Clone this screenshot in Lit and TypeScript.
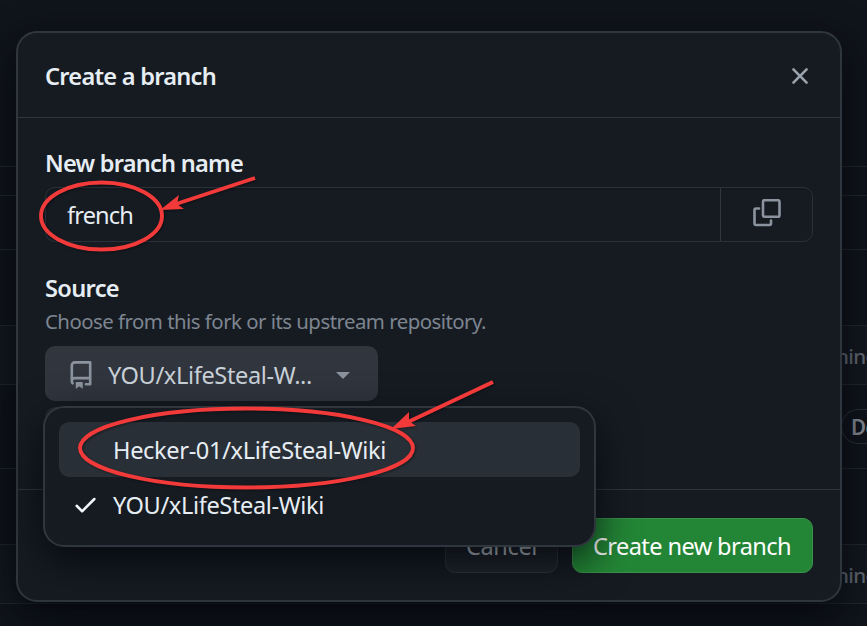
import { LitElement, html, css, svg } from "lit";
import { customElement } from "lit/decorators.js";

@customElement("app-root")
export class AppRoot extends LitElement {
  static styles = css`
    :host { display: block; position: relative; width: 867px; height: 626px; overflow: hidden;
      background: #10141b; color: #e6edf3; font: 23.6px/36px "Noto Sans", "Open Sans", sans-serif; box-sizing: border-box; }
    * { box-sizing: border-box; }
    svg { display: block; }
    .t { white-space: nowrap; display: block; }
    .page { position: absolute; inset: 0; display: grid; grid-template-rows: 167px 29px 54px 76px 59px 84px 76px 59px 1fr; color: #646b75; font-size: 20.6px; }
    .row { border-bottom: 1px solid #22272e; display: flex; align-items: center; justify-content: flex-end; overflow: hidden; }
    .row:last-child { border-bottom: 0; }
    .row.tint { background: #13181f; padding-top: 1px; }
    .clip { width: 31px; overflow: hidden; white-space: nowrap; letter-spacing: -0.6px; font-weight: 500; }
    .pill { width: 26px; height: 35px; flex: none; border: 1px solid #2b3037; border-right: 0; border-radius: 18px 0 0 18px; padding-left: 9px; line-height: 35px; font-weight: 600; color: #868c95; overflow: hidden; white-space: nowrap; letter-spacing: -0.8px; }
    .dialog { position: absolute; left: 16px; top: 31px; width: 826px; height: 571px; border: 2px solid #30363d; border-radius: 21px;
      background: #161b22; box-shadow: 0 14px 41px rgba(1, 4, 9, .75); display: flex; flex-direction: column; }
    header { height: 85px; flex: none; border-bottom: 1px solid #30363d; display: flex; justify-content: space-between; align-items: center; padding: 1px 26px 0 27px; }
    .b { font-weight: 600; }
    .body { flex: 1; padding: 27px 27px 0; display: flex; flex-direction: column; }
    .field { display: flex; height: 55px; margin-top: 6px; border: 1px solid #2b3138; border-radius: 10px; box-shadow: inset 0 2px 0 rgba(1, 4, 9, .12); }
    .value { flex: 1; padding: 9px 0 0 21px; }
    .copy { width: 92px; border-left: 1px solid #30363d; display: flex; justify-content: center; padding-top: 11px; }
    .source { margin-top: 28px; }
    .hint { color: #7d8590; font-size: 20.4px; line-height: 30px; }
    .select { width: 333px; height: 55px; flex: none; margin-top: 10px; border-radius: 10px; background: #30353e; color: #c9d1d9; display: flex; align-items: center; padding: 3px 28px 0 22px; }
    .select .t { margin-left: 13px; width: 210px; flex: none; }
    .caret { margin-left: 18px; border: 7px solid transparent; border-top-color: #8b949e; border-bottom: 0; }
    footer { height: 111px; flex: none; border-top: 1px solid #30363d; display: flex; justify-content: flex-end; padding: 28px 27px 0 0; gap: 14px; }
    .btn { height: 55px; border-radius: 10px; border: 1px solid #30353c; background: #1f242b; color: #c9d1d9; padding: 9px 0 0 20px; width: 113px; }
    .btn.go { width: 241px; background: #238636; border-color: #3b9249; color: #fff; }
    .under { position: absolute; left: 45px; top: 407px; width: 60px; height: 60px; border-radius: 10px; background: #252a31; }
    .menu { position: absolute; left: 43px; top: 406px; width: 553px; height: 141px; border: 2px solid #30363d; border-radius: 21px; background: #161b22;
      padding: 14px; box-shadow: 0 14px 41px rgba(1, 4, 9, .75); }
    .item { height: 55px; border-radius: 10px; display: flex; align-items: center; padding-left: 13px; padding-top: 1px; }
    .item.on { background: #292f36; }
    .tick { width: 41px; height: 28px; flex: none; }
    .marks { position: absolute; left: 0; top: 0; filter: drop-shadow(1px 1px 1px rgba(0, 0, 0, .4)); }
  `;

  updated() {
    // Spread each label's letters to reach its design width.
    const fit = () => this.renderRoot.querySelectorAll<HTMLElement>("[data-w]").forEach((el) => {
      el.style.letterSpacing = "0px";
      const range = document.createRange();
      range.selectNodeContents(el);
      const n = el.textContent!.length;
      el.style.letterSpacing = (Number(el.dataset.w) - range.getBoundingClientRect().width) / n + "px";
    });
    fit();
    document.fonts.ready.then(fit);
  }

  label(text: string, w: number, cls = "") {
    return html`<span class="t ${cls}" data-w=${w}>${text}</span>`;
  }

  icon(d: string, fill: string, size = 28) {
    return html`<svg width=${size} height=${size} viewBox="0 0 16 16" fill=${fill}>${svg`<path d=${d} />`}</svg>`;
  }

  render() {
    return html`
      <div class="page">
        <div class="row"></div><div class="row"></div><div class="row"></div><div class="row"></div>
        <div class="row tint"><span class="clip">hing</span></div>
        <div class="row"><span class="pill">De</span></div>
        <div class="row"></div>
        <div class="row tint"><span class="clip">hing</span></div>
        <div class="row"></div>
      </div>
      <section class="dialog">
        <header>
          ${this.label("Create a branch", 171, "b")}
          ${this.icon("M3.72 3.72a.75.75 0 0 1 1.06 0L8 6.94l3.22-3.22a.749.749 0 0 1 1.275.326.749.749 0 0 1-.215.734L9.06 8l3.22 3.22a.749.749 0 0 1-.326 1.275.749.749 0 0 1-.734-.215L8 9.06l-3.22 3.22a.751.751 0 0 1-1.042-.018.751.751 0 0 1-.018-1.042L6.94 8 3.72 4.78a.75.75 0 0 1 0-1.06Z", "#9aa2ac")}
        </header>
        <div class="body">
          ${this.label("New branch name", 198, "b")}
          <div class="field">
            <div class="value">${this.label("french", 66)}</div>
            <div class="copy">
              <svg width="28" height="28" viewBox="0 0 28 28" fill="none" stroke="#8b949e" stroke-width="2.6" stroke-linecap="round" stroke-linejoin="round">
                <rect x="10" y="1.2" width="16.5" height="16.5" rx="1.5" />
                <path d="M6 9.5H3Q1.5 9.5 1.5 11V24.5Q1.5 26 3 26H16.5Q18 26 18 24.5V21.5" />
              </svg>
            </div>
          </div>
          ${this.label("Source", 74, "b source")}
          ${this.label("Choose from this fork or its upstream repository.", 441, "hint")}
          <div class="select">
            ${this.icon("M2 2.5A2.5 2.5 0 0 1 4.5 0h8.75a.75.75 0 0 1 .75.75v12.5a.75.75 0 0 1-.75.75h-2.5a.75.75 0 0 1 0-1.5h1.75v-2h-8a1 1 0 0 0-.714 1.7.75.75 0 1 1-1.072 1.05A2.495 2.495 0 0 1 2 11.5Zm10.5-1h-8a1 1 0 0 0-1 1v6.708A2.486 2.486 0 0 1 4.5 9h8ZM5 12.25a.25.25 0 0 1 .25-.25h3.5a.25.25 0 0 1 .25.25v3.25a.25.25 0 0 1-.4.2l-1.45-1.087a.249.249 0 0 0-.3 0L5.4 15.7a.25.25 0 0 1-.4-.2Z", "#8b949e")}
            ${this.label("YOU/xLifeSteal-W...", 204)}
            <span class="caret"></span>
          </div>
        </div>
        <footer>
          <div class="btn">${this.label("Cancel", 71)}</div>
          <div class="btn go">${this.label("Create new branch", 198)}</div>
        </footer>
      </section>
      <div class="under"></div>
      <div class="menu">
        <div class="item on"><span class="tick"></span>${this.label("Hecker-01/xLifeSteal-Wiki", 273)}</div>
        <div class="item">
          <span class="tick">${this.icon("M13.78 4.22a.75.75 0 0 1 0 1.06l-7.25 7.25a.75.75 0 0 1-1.06 0L2.22 9.28a.751.751 0 0 1 .018-1.042.751.751 0 0 1 1.042-.018L6 10.94l6.72-6.72a.75.75 0 0 1 1.06 0Z", "#f0f6fc", 27)}</span>
          ${this.label("YOU/xLifeSteal-Wiki", 211)}
        </div>
      </div>
      <svg class="marks" width="867" height="626" viewBox="0 0 867 626" fill="none" stroke="#f23a3a" stroke-width="3.9">
        <ellipse cx="101.5" cy="216" rx="60.5" ry="33.5" />
        <ellipse cx="246.5" cy="448" rx="166.5" ry="39.5" />
        <path d="M255 178 176 204M493 382 408 422" />
        <path d="M160 210 179 195 177 204 184 209ZM391 429 409 412 409 421 416 426Z" fill="#f23a3a" stroke="none" />
      </svg>
    `;
  }
}
